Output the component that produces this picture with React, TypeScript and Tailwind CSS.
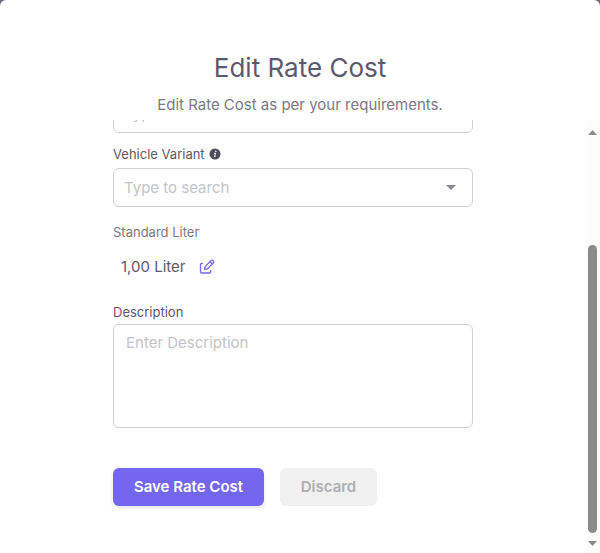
import type { ReactNode } from "react";

function SearchField({ id, label }: { id: string; label: string }) {
  return (
    <div className="flex h-[39px] w-full shrink-0 items-center rounded-md border border-[#d0d0d3] bg-white pr-[11px] pl-2.5">
      <input
        id={id}
        type="text"
        aria-label={label}
        placeholder="Type to search"
        className="min-w-0 flex-1 bg-transparent text-[15px] leading-6 text-[#5d596c] outline-none placeholder:text-[#c4c4c8]"
      />
      <button type="button" aria-label={`Open ${label} options`} className="flex size-5 items-center justify-center">
        <svg width="10" height="5" viewBox="0 0 10 5" className="fill-[#8b8994]" aria-hidden="true">
          <path d="M0 0h10L5 5z" />
        </svg>
      </button>
    </div>
  );
}

function FieldLabel({ htmlFor, children }: { htmlFor: string; children: ReactNode }) {
  return (
    <label htmlFor={htmlFor} className="flex items-center gap-1 text-[13px] leading-5 text-[#5d596c]">
      {children}
    </label>
  );
}

function InfoIcon() {
  return (
    <svg width="12" height="12" viewBox="0 0 12 12" aria-hidden="true">
      <circle cx="6" cy="6" r="5.5" fill="#4f4b5e" />
      <circle cx="6.8" cy="3.3" r="0.8" fill="#fff" />
      <path d="M5 5.2h1.5L5.6 8.7h1" fill="none" stroke="#fff" strokeWidth="1" />
    </svg>
  );
}

function EditIcon() {
  return (
    <svg width="16" height="16" viewBox="0 0 16 16" fill="none" stroke="#7367f0" strokeWidth="1.3" strokeLinecap="round" strokeLinejoin="round" aria-hidden="true">
      <path d="M3.4 4.4H2.8A1.3 1.3 0 0 0 1.5 5.7v7A1.3 1.3 0 0 0 2.8 14h7.6a1.3 1.3 0 0 0 1.3-1.3v-1.2" />
      <path d="M5.6 10.4l.5-2.8 6.1-6.1a1.1 1.1 0 0 1 1.6 0l.7.7a1.1 1.1 0 0 1 0 1.6L8.4 9.9z" />
      <path d="M11 2.8l2.2 2.2" />
    </svg>
  );
}

function ScrollRail() {
  return (
    <div className="flex w-3.5 shrink-0 flex-col items-center bg-[#fcfcfc] pt-2.5 pr-px pb-[7px]" aria-hidden="true">
      <svg width="9" height="5" viewBox="0 0 9 5" className="fill-[#8b8b8b]">
        <path d="M0 5h9L4.5 0z" />
      </svg>
      <div className="mt-[110px] mb-2 w-[9px] flex-1 rounded-full bg-[#8b8b8b]" />
      <svg width="9" height="5" viewBox="0 0 9 5" className="fill-[#8b8b8b]">
        <path d="M0 0h9L4.5 5z" />
      </svg>
    </div>
  );
}

export default function App() {
  return (
    <div className="min-h-screen bg-[#6b6874] font-['Inter','Liberation_Sans',sans-serif]">
      <section aria-labelledby="dialog-title" className="flex min-h-screen flex-col rounded-t-md bg-white">
        <header className="px-4 pt-12 pb-[3px] text-center">
          <h1 id="dialog-title" className="text-[26px] leading-10 font-normal text-[#5d596c]">
            Edit Rate Cost
          </h1>
          <p className="mt-[5px] text-[15px] leading-6 text-[#7b7886]">Edit Rate Cost as per your requirements.</p>
        </header>

        <div className="flex flex-1">
          <form className="min-w-0 flex-1" onSubmit={(e) => e.preventDefault()}>
            <div className="mx-auto flex w-[360px] max-w-full flex-col">
              <div className="flex h-[13px] items-end overflow-hidden">
                <SearchField id="vehicle" label="Vehicle" />
              </div>

              <div className="mt-[11px] flex flex-col gap-1">
                <FieldLabel htmlFor="variant">
                  Vehicle Variant
                  <InfoIcon />
                </FieldLabel>
                <SearchField id="variant" label="Vehicle Variant" />
              </div>

              <div className="mt-[15px] text-[13px] leading-5 text-[#7b7886]">Standard Liter</div>
              <div className="mt-[13px] flex items-center gap-[14px] pl-2 text-[15px] leading-6 text-[#5d596c]">
                <span>1,00 Liter</span>
                <button type="button" aria-label="Edit standard liter">
                  <EditIcon />
                </button>
              </div>

              <div className="mt-[23px] flex flex-col gap-0.5">
                <FieldLabel htmlFor="description">Description</FieldLabel>
                <textarea
                  id="description"
                  placeholder="Enter Description"
                  className="block h-[104px] w-full resize-none rounded-md border border-[#d0d0d3] px-3 py-[6px] text-[15px] leading-6 text-[#5d596c] outline-none placeholder:text-[#c4c4c8]"
                />
              </div>

              <div className="mt-10 mb-11 flex gap-4 text-[15px] leading-[22px] font-semibold">
                <button type="submit" className="w-[151px] rounded-md bg-[#7367f0] py-2 text-white shadow-[0_2px_4px_rgba(165,163,174,0.3)]">
                  Save Rate Cost
                </button>
                <button type="button" className="w-[97px] rounded-md bg-[#f0f0f0] py-2 text-[#aeaeb2]">
                  Discard
                </button>
              </div>
            </div>
          </form>
          <ScrollRail />
        </div>
      </section>
    </div>
  );
}
